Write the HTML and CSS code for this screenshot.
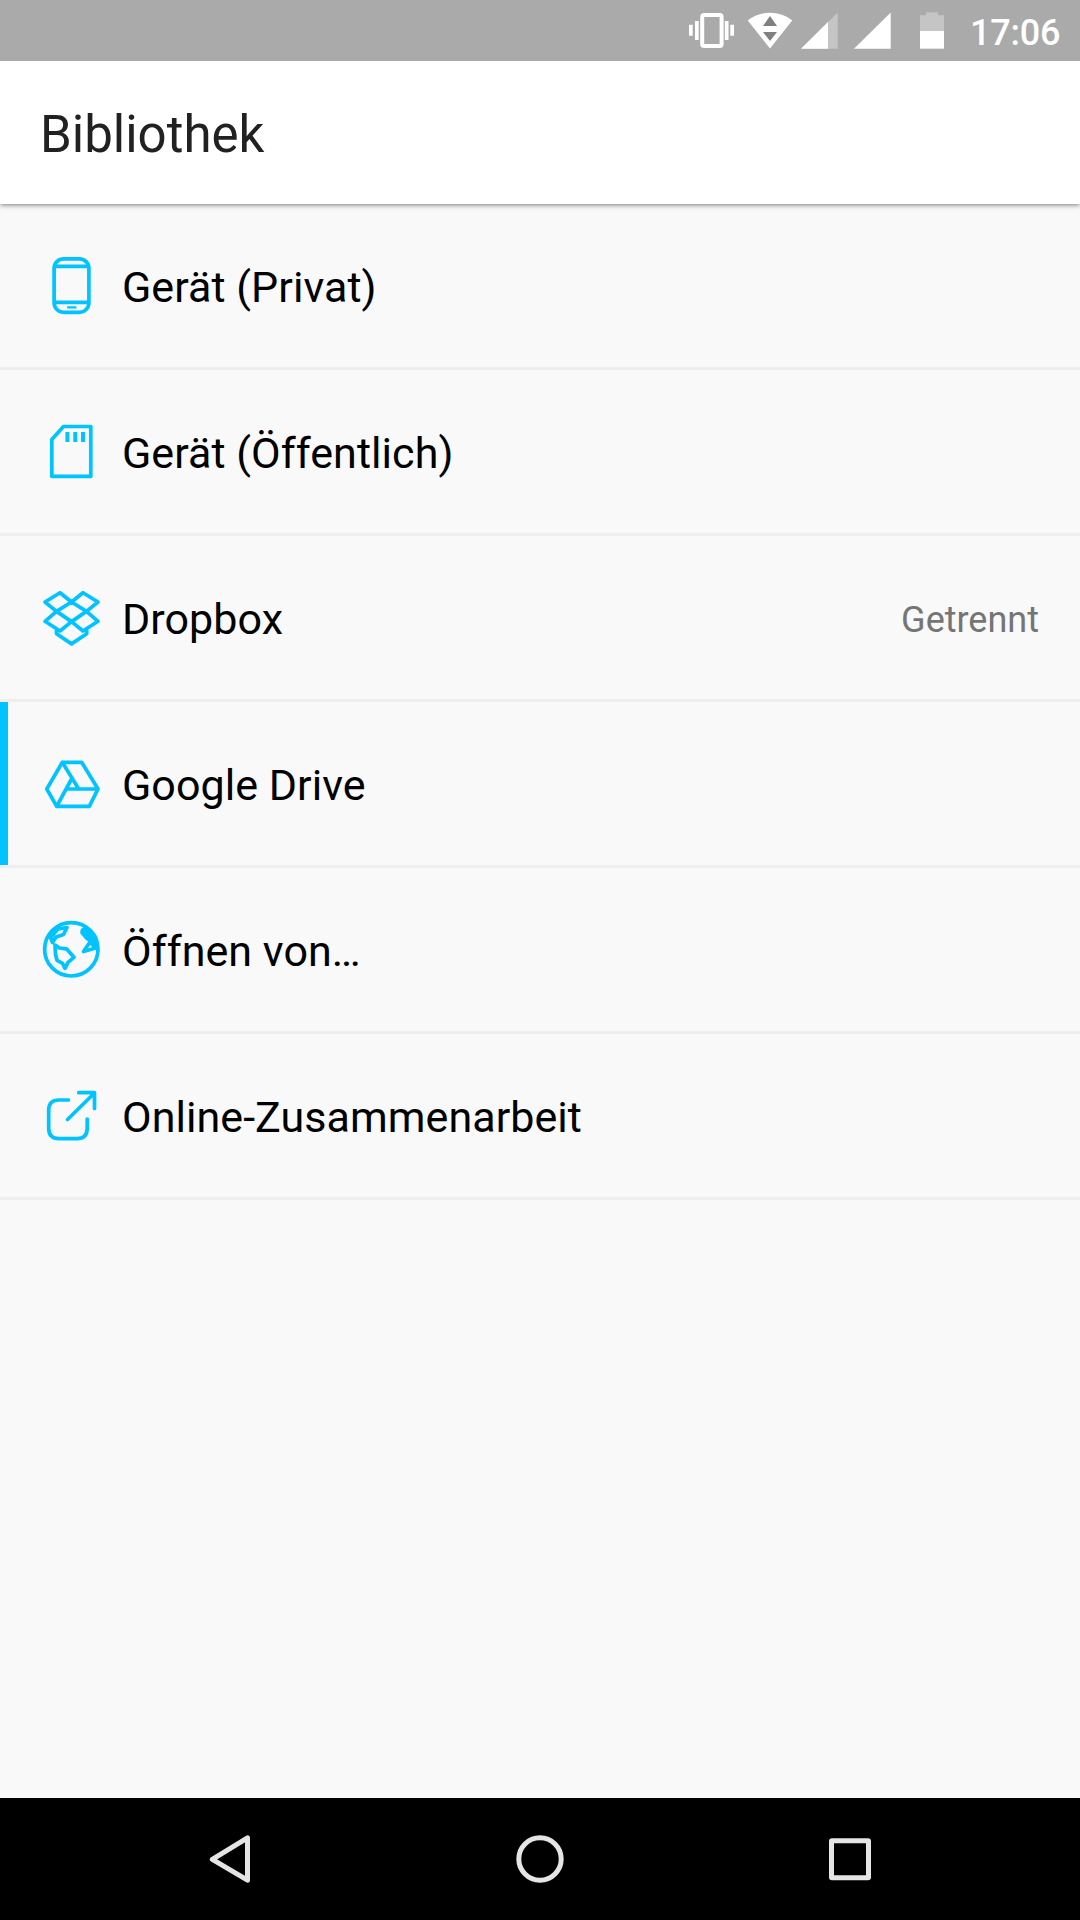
FILE: index.html
```html
<!DOCTYPE html>
<html lang="de">
<head>
<meta charset="utf-8">
<title>Bibliothek</title>
<link rel="stylesheet" href="styles.css">
</head>
<body>
<div class="screen">
  <div class="status-bar">
    <svg class="vibrate" width="45" height="61" viewBox="0 0 45 61"><path d="M0 24.8h3.7v11H0zM6 21h3.7v19H6zM35.8 21h3.7v19h-3.7zM41.3 24.8H45v11h-3.7z" fill="#fff"/><rect x="13.2" y="15" width="19.4" height="31" rx="2" fill="none" stroke="#fff" stroke-width="4"/></svg>
    <svg class="wifi" width="44" height="61" viewBox="0 0 44 61"><path d="M-.2 20.5Q9 12.8 22 12.8T44.2 20.5L22 48.6z" fill="#fff"/><path d="M22 16l7 10H15zM15 32h14l-7 9z" fill="#808080"/></svg>
    <svg class="signal" width="37" height="61" viewBox="0 0 37 61"><path d="M0 48.7L36.7 12.5v36.2z" fill="#c5c5c5"/><path d="M0 48.7L27 22v26.7z" fill="#fff"/></svg>
    <svg class="signal" width="37" height="61" viewBox="0 0 37 61"><path d="M0 48.7L36.7 12.5v36.2z" fill="#fff"/></svg>
    <svg class="battery" width="24" height="61" viewBox="0 0 24 61"><path d="M0 15.2h6v-3h12v3h6V31H0z" fill="#c5c5c5"/><path d="M0 31h24v17.7H0z" fill="#fff"/></svg>
    <span class="clock">17:06</span>
  </div>
  <header class="toolbar"><h1>Bibliothek</h1></header>
  <ul class="locations">
    <li class="location">
      <svg class="icon" viewBox="0 0 60 60"><rect x="13.1" y="2.8" width="34.8" height="53.5" rx="9.5"/><path d="M14 10.3h33M14 46.3h33"/><path d="M27 51.4h7.5" stroke-width="2.3"/></svg>
      <span class="name">Gerät (Privat)</span>
    </li>
    <li class="location">
      <svg class="icon" viewBox="0 0 60 60"><path d="M22.5 4.5h27.3v49.8h-39V17.6z"/><path class="contacts" d="M26.4 10v10M34.3 10v10M42 10v10"/></svg>
      <span class="name">Gerät (Öffentlich)</span>
    </li>
    <li class="location">
      <svg class="icon" viewBox="0 0 60 60"><path d="M19 4.7L4 14l11.5 9.4L30.5 14zM42 4.7L57 14l-11.5 9.4L30.5 14zM15.5 23.4L4 33.3 19 43l11.5-9.4zM45.500 23.400L57 33.300 42 43l-11.500-9.400zM15.500 42v3.700l15 10.200 15.200-10.200V42"/></svg>
      <span class="name">Dropbox</span>
      <span class="state">Getrennt</span>
    </li>
    <li class="location selected">
      <svg class="icon" viewBox="0 0 60 60"><path d="M21.300 8.300h19.400L57 35l-8.700 17.400H15.700L5.800 35zL37.700 35M57 35H26M15.700 52.400L30 26"/></svg>
      <span class="name">Google Drive</span>
    </li>
    <li class="location">
      <svg class="icon" viewBox="0 0 60 60"><circle cx="30.3" cy="29.3" r="26.700"/><path d="M9.500 17.500L17 9l9-1.500-3.500 7-7.500 2.500-3.500 5.500zM14 25l4.500 3 7 .8 7.500 8.500-6 5-3 6-2.500-5-5.500-3-1.500-6zM49 22l5.500 6-12 3.500z"/><path class="land" d="M41.500 10l4-2.500 8.500 9L56 26 49 20l-3-1.500-5-6z"/></svg>
      <span class="name">Öffnen von…</span>
    </li>
    <li class="location">
      <svg class="icon" viewBox="0 0 60 60"><path d="M27.500 14H18Q7.700 14 7.700 24.300v18Q7.700 52.600 18 52.600H36Q46.200 52.600 46.200 42.300V33M26.500 33.500L53 7.500M37.700 6.700H53.500V22.500"/></svg>
      <span class="name">Online-Zusammenarbeit</span>
    </li>
  </ul>
  <nav class="nav-bar">
    <svg viewBox="0 0 60 60"><path d="M12.300 30.300L47.500 8.800v42.400z"/></svg>
    <svg viewBox="0 0 60 60"><circle cx="30" cy="30" r="21.200"/></svg>
    <svg viewBox="0 0 60 60"><rect x="11.500" y="11.700" width="37" height="37" rx=".5"/></svg>
  </nav>
</div>
</body>
</html>
```
FILE: styles.css
```css
* { box-sizing: border-box; }

body {
  margin: 0;
  font-family: Roboto, sans-serif;
}

.screen {
  display: flex;
  flex-direction: column;
  width: 1080px;
  height: 1920px;
  background: #f9f9f9;
}

.status-bar {
  display: flex;
  justify-content: flex-end;
  height: 61px;
  padding-right: 20px;
  background: #aaa;
}

.status-bar svg { flex: none; }
.vibrate { margin-right: 14px; }
.wifi { margin-right: 9px; }
.signal { margin-right: 16px; }
.signal + .signal { margin-right: 29px; }
.battery { margin-right: 26px; }

.clock {
  width: 90px;
  color: #fff;
  font-size: 36px;
  font-weight: 500;
  letter-spacing: -.2px;
  line-height: 66px;
}

.toolbar {
  position: relative;
  display: flex;
  align-items: center;
  height: 143px;
  padding: 4px 0 0 40px;
  background: #fff;
  box-shadow: 0 1px 5px rgba(0, 0, 0, .5);
  clip-path: inset(0 0 -12px 0);
}

.toolbar h1 {
  margin: 0;
  color: #212121;
  font-size: 51px;
  font-weight: 400;
}

.locations {
  flex: 1;
  margin: 0;
  padding: 0;
  list-style: none;
}

.location {
  display: flex;
  align-items: center;
  height: 166px;
  padding: 0 41px;
  border-bottom: 3px solid #eee;
}

.selected {
  padding-left: 33px;
  border-left: 8px solid #00c3ff;
  border-bottom: 0;
  height: 163px;
  margin-bottom: 3px;
  box-shadow: 0 3px #eee;
}

.icon {
  flex: none;
  width: 60px;
  height: 60px;
  fill: none;
  stroke: #00c3ff;
  stroke-width: 3.7px;
  stroke-linecap: round;
  stroke-linejoin: round;
}

.contacts {
  stroke-width: 4px;
  stroke-linecap: butt;
}

.land { fill: #00c3ff; }

.name {
  flex: 1;
  margin-left: 21px;
  padding-top: 2px;
  color: #000;
  font-size: 43px;
  letter-spacing: .06px;
}

.state {
  padding-top: 4px;
  color: #757575;
  font-size: 36px;
}

.nav-bar {
  display: flex;
  justify-content: space-between;
  align-items: center;
  height: 122px;
  padding: 0 200px;
  background: #000;
}

.nav-bar svg {
  width: 60px;
  height: 60px;
  fill: none;
  stroke: #e5e5e5;
  stroke-width: 5px;
  stroke-linejoin: round;
}
```
